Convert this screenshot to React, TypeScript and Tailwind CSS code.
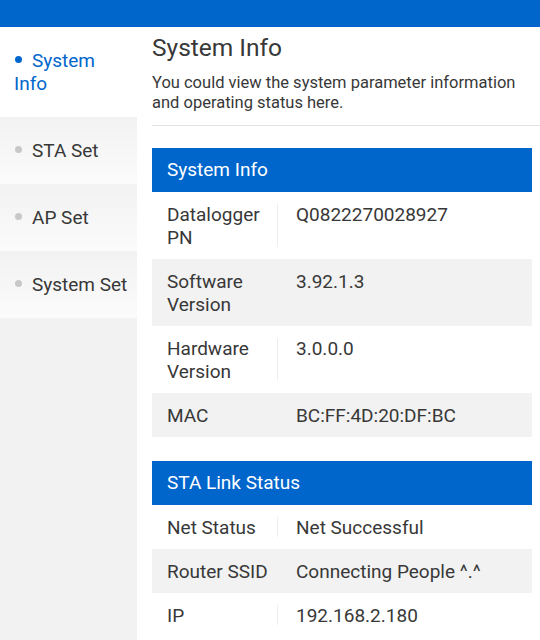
const menu = [
  { label: 'System Info', active: true },
  { label: 'STA Set', active: false },
  { label: 'AP Set', active: false },
  { label: 'System Set', active: false },
]

const systemRows: [string, string][] = [
  ['Datalogger PN', 'Q0822270028927'],
  ['Software Version', '3.92.1.3'],
  ['Hardware Version', '3.0.0.0'],
  ['MAC', 'BC:FF:4D:20:DF:BC'],
]

const staRows: [string, string][] = [
  ['Net Status', 'Net Successful'],
  ['Router SSID', 'Connecting People ^.^'],
  ['IP', '192.168.2.180'],
]

function InfoTable({ title, rows }: { title: string; rows: [string, string][] }) {
  return (
    <section className="mr-[8px]">
      <div className="h-[44px] bg-[#0066cc] pl-[15px] flex items-center text-[19px] text-white">{title}</div>
      {rows.map(([label, value], i) => (
        <div key={label} className={`flex text-[19px] leading-[23px] text-[#383838] ${i % 2 ? 'bg-[#f2f2f2]' : 'bg-white'}`}>
          <div className="w-[125px] shrink-0 pl-[15px] pr-[6px] pt-[11px] pb-[10px]">{label}</div>
          <div className={`w-px my-[12px] ${i % 2 ? 'bg-[#f2f2f2]' : 'bg-[#eeeeee]'}`} />
          <div className="flex-1 pl-[18px] pt-[11px] pb-[10px]">{value}</div>
        </div>
      ))}
    </section>
  )
}

export default function App() {
  return (
    <div className="w-[540px] h-[640px] overflow-hidden bg-white font-['Roboto',sans-serif]">
      <div className="h-[27px] bg-[#0066cc]" />
      <div className="flex">
        <aside className="w-[137px] shrink-0 min-h-[613px] bg-[#f2f2f2]">
          {menu.map((m) => (
            <div
              key={m.label}
              className={`pl-[14px] pr-[8px] py-[22px] text-[19px] leading-[23px] ${
                m.active ? 'bg-white text-[#0066cc]' : 'bg-gradient-to-b from-[#f2f2f2] to-[#fbfbfb] text-[#383838]'
              }`}
            >
              <span
                className={`inline-block w-[7px] h-[7px] rounded-full ml-[1px] mr-[10px] align-middle relative -top-[2px] ${
                  m.active ? 'bg-[#0066cc]' : 'bg-[#c8c8c8]'
                }`}
              />
              {m.label}
            </div>
          ))}
        </aside>
        <main className="flex-1 pl-[15px]">
          <h1 className="pt-[6px] text-[24.5px] leading-[30px] text-[#383838]">System Info</h1>
          <p className="mt-[10px] pr-[8px] text-[16.5px] leading-[20px] text-[#383838]">
            You could view the system parameter information and operating status here.
          </p>
          <div className="mt-[12px] border-t border-[#e3e3e3]" />
          <div className="mt-[22px]">
            <InfoTable title="System Info" rows={systemRows} />
          </div>
          <div className="mt-[24px]">
            <InfoTable title="STA Link Status" rows={staRows} />
          </div>
        </main>
      </div>
    </div>
  )
}
